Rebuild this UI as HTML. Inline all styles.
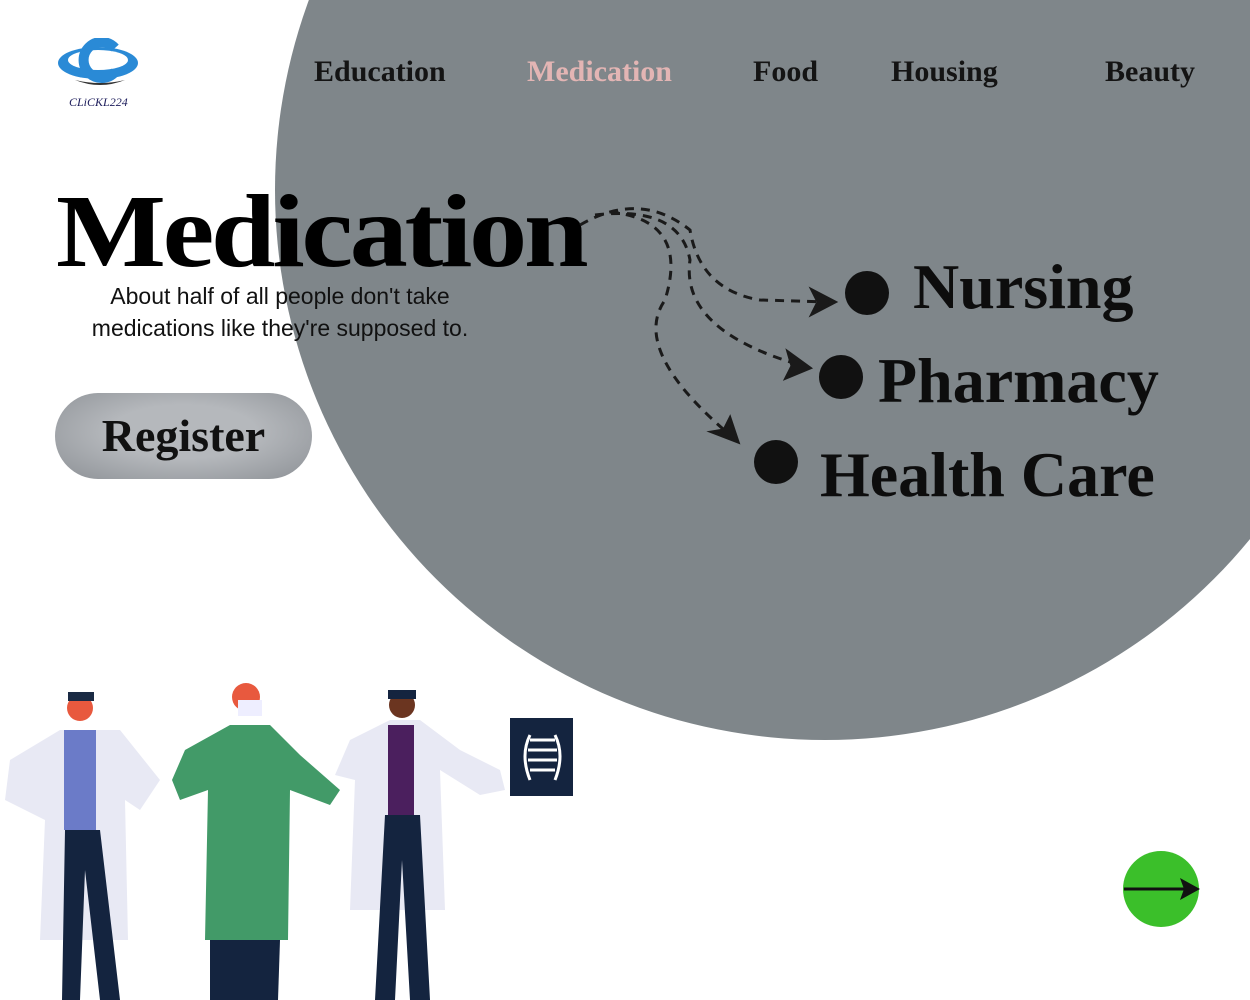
<!DOCTYPE html>
<html><head><meta charset="utf-8"><style>
*{margin:0;padding:0;box-sizing:border-box}
body{width:1250px;height:1000px;overflow:hidden;background:#fff;position:relative;font-family:"Liberation Serif",serif}
.circ{position:absolute;left:275px;top:-360px;width:1100px;height:1100px;border-radius:50%;background:#7f868a}
.nav{position:absolute;top:55px;font-weight:bold;font-size:30px;color:#141414}
.t{position:absolute;left:56px;top:172px;font-size:104px;font-weight:900;letter-spacing:-3px;color:#000;transform:scaleX(1.12);transform-origin:left}
.p{position:absolute;left:50px;width:460px;text-align:center;top:280px;font-family:"Liberation Sans",sans-serif;font-size:23px;line-height:32px;color:#111}
.btn{position:absolute;left:55px;top:393px;width:257px;height:86px;border-radius:43px;background:radial-gradient(ellipse at 50% 45%,#b5b8bc 40%,#8d9196 100%);font-size:46px;font-weight:bold;text-align:center;line-height:86px;color:#111}
.it{position:absolute;font-size:64px;font-weight:bold;color:#0d0d0d}
.dot{position:absolute;width:44px;height:44px;border-radius:50%;background:#111}
</style></head><body>
<div class="circ"></div>
<svg style="position:absolute;left:55px;top:38px" width="90" height="72">
<ellipse cx="43" cy="25" rx="40" ry="16" fill="#2a8ad6"/><ellipse cx="43" cy="22" rx="30" ry="10" fill="#fff"/>
<path d="M60 10 A18 18 0 1 0 60 34" stroke="#2a8ad6" stroke-width="10" fill="none"/>
<path d="M20 42 Q45 52 70 42 Q45 48 20 42Z" fill="#333"/>
<text x="14" y="68" font-size="12" font-style="italic" fill="#1b1b5a" font-family="Liberation Serif">CLiCKL224</text></svg>
<div class="nav" style="left:314px">Education</div>
<div class="nav" style="left:527px;color:#e3b5b4">Medication</div>
<div class="nav" style="left:753px">Food</div>
<div class="nav" style="left:891px">Housing</div>
<div class="nav" style="left:1105px">Beauty</div>
<div class="t">Medication</div>
<div class="p">About half of all people don't take medications like they're supposed to.</div>
<div class="btn">Register</div>
<svg style="position:absolute;left:0;top:0" width="1250" height="1000" fill="none" stroke="#1a1a1a" stroke-width="3" stroke-dasharray="9 7">
<path d="M580 225 Q640 190 690 230 Q700 290 760 300 L830 302"/>
<path d="M595 215 Q680 205 690 260 Q680 330 800 365"/>
<path d="M610 212 Q690 220 665 300 Q630 350 730 435"/>
<g stroke-dasharray="none" fill="#1a1a1a"><path d="M835 302 L812 290 L818 302 L812 314Z"/><path d="M810 368 L788 352 L792 366 L786 378Z"/><path d="M738 442 L730 418 L724 430 L712 432Z"/></g>
</svg>
<div class="dot" style="left:845px;top:271px"></div>
<div class="dot" style="left:819px;top:355px"></div>
<div class="dot" style="left:754px;top:440px"></div>
<div class="it" style="left:913px;top:250px">Nursing</div>
<div class="it" style="left:878px;top:344px">Pharmacy</div>
<div class="it" style="left:820px;top:438px">Health Care</div>
<svg style="position:absolute;left:0;top:680px" width="600" height="320">
<path d="M10 80 L60 50 L120 50 L160 100 L140 130 L125 120 L128 260 L40 260 L45 140 L5 120Z" fill="#e8e9f4"/>
<rect x="64" y="50" width="32" height="100" fill="#6b7bc8"/>
<path d="M65 150 L100 150 L120 320 L100 320 L85 190 L80 320 L62 320Z" fill="#14243f"/>
<circle cx="80" cy="28" r="13" fill="#e8593e"/><rect x="68" y="12" width="26" height="9" fill="#1a2a44"/>
<path d="M185 70 L230 45 L270 45 L300 75 L340 110 L330 125 L290 110 L288 260 L205 260 L208 110 L180 120 L172 100Z" fill="#429a68"/>
<path d="M210 260 L280 260 L278 320 L210 320Z" fill="#14243f"/>
<circle cx="246" cy="17" r="14" fill="#e8593e"/><rect x="238" y="20" width="24" height="16" fill="#eef" />
<path d="M350 60 L390 40 L420 40 L460 70 L500 90 L505 110 L480 115 L440 90 L445 230 L350 230 L355 100 L335 95Z" fill="#e8e9f4"/>
<rect x="388" y="45" width="26" height="90" fill="#4b1f5e"/>
<path d="M385 135 L420 135 L430 320 L410 320 L402 180 L395 320 L375 320Z" fill="#14243f"/>
<circle cx="402" cy="25" r="13" fill="#6b3520"/><rect x="388" y="10" width="28" height="9" fill="#14243f"/>
<rect x="510" y="38" width="63" height="78" fill="#14243f"/>
<g stroke="#fff" stroke-width="3" fill="none"><path d="M530 55 Q520 75 530 100 M555 55 Q565 75 555 100 M530 60 H555 M528 70 H557 M528 80 H557 M530 90 H555"/></g>
</svg>
<svg style="position:absolute;left:1122px;top:850px" width="80" height="78">
<circle cx="39" cy="39" r="38" fill="#3bbf2a"/>
<path d="M2 39 H70" stroke="#111" stroke-width="3"/><path d="M78 39 L58 28 L62 39 L58 50Z" fill="#111"/></svg>
</body></html>
